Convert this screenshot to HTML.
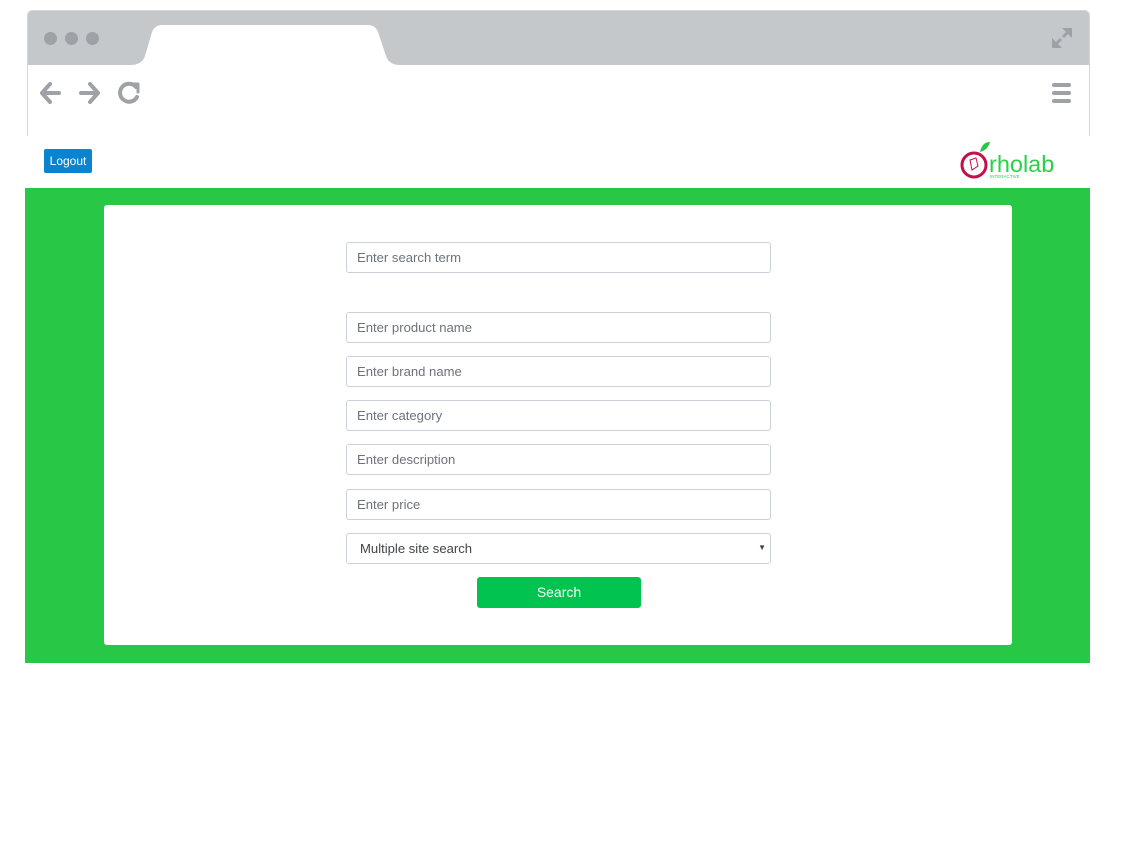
<!DOCTYPE html>
<html><head><style>
*{box-sizing:border-box;margin:0;padding:0}
body{width:1130px;height:864px;background:#fff;font-family:"Liberation Sans",sans-serif;position:relative;overflow:hidden}
.abs{position:absolute}
.inp{position:absolute;left:346px;width:425px;height:31px;border:1px solid #ccd0da;border-radius:3px;font-size:13.1px;color:#6c737a;padding:7px 10px;background:#fff}
</style></head><body>
<div class="abs" style="left:27px;top:10px;width:1063px;height:126px;border:1px solid #d4d6d9;border-bottom:none;border-radius:5px 5px 0 0;background:#fff"></div>
<div class="abs" style="left:28px;top:11px;width:1061px;height:54px;background:#c5c8cb;border-radius:4px 4px 0 0"></div>
<svg class="abs" style="left:130px;top:24px" width="270" height="42"><path d="M0 41 Q12 41 15 32 L22 8 Q25 1 32 1 L238 1 Q245 1 248 8 L256 32 Q259 41 270 41 Z" fill="#fff"/></svg>
<div class="abs" style="left:44px;top:32px;width:13px;height:13px;border-radius:50%;background:#9ea2a6"></div>
<div class="abs" style="left:65px;top:32px;width:13px;height:13px;border-radius:50%;background:#9ea2a6"></div>
<div class="abs" style="left:86px;top:32px;width:13px;height:13px;border-radius:50%;background:#9ea2a6"></div>
<svg class="abs" style="left:1050px;top:26px" width="24" height="24" stroke="#9ea2a6" stroke-width="3" fill="#9ea2a6"><path d="M4 20 L11 13"/><path d="M20 4 L13 11"/><path d="M2 12 L2 22 L12 22Z" stroke="none"/><path d="M22 2 L12 2 L22 12Z" stroke="none"/></svg>
<svg class="abs" style="left:38px;top:80px" width="110" height="26" fill="none" stroke="#9ea2a6" stroke-width="4" stroke-linecap="round" stroke-linejoin="round"><path d="M4 13 H21 M12 4 L4 13 L12 22"/><path d="M43 13 H60 M52 4 L60 13 L52 22"/><path d="M98 7 A9 9 0 1 0 99 17"/><path d="M91 4 L100 4 L100 12" stroke-width="3"/></svg>
<div class="abs" style="left:1052px;top:83px;width:19px;height:4px;border-radius:2px;background:#9ea2a6"></div>
<div class="abs" style="left:1052px;top:91px;width:19px;height:4px;border-radius:2px;background:#9ea2a6"></div>
<div class="abs" style="left:1052px;top:99px;width:19px;height:4px;border-radius:2px;background:#9ea2a6"></div>
<div class="abs" style="left:44px;top:149px;width:48px;height:24px;background:#0a84d0;border-radius:2px;color:#fff;font-size:12px;line-height:24px;text-align:center">Logout</div>
<svg class="abs" style="left:958px;top:140px" width="105" height="44"><path d="M22 12 Q24 2 32 2 Q30 10 22 12Z" fill="#2ac64a"/><circle cx="16" cy="25" r="12" fill="none" stroke="#c4104a" stroke-width="3"/><path d="M12 20 L18 18 L20 26 L14 30 Z" fill="none" stroke="#c4104a" stroke-width="1"/><text x="31" y="32" font-family="Liberation Sans" font-size="23.5" fill="#2ad04a">rholab</text><text x="32" y="38" font-family="Liberation Sans" font-size="4.5" fill="#2ad04a">INTERACTIVE</text></svg>
<div class="abs" style="left:25px;top:188px;width:1065px;height:475px;background:#28c745"></div>
<div class="abs" style="left:104px;top:205px;width:908px;height:440px;background:#fff;border-radius:3px"></div>
<div class="inp" style="top:242px">Enter search term</div>
<div class="inp" style="top:312px">Enter product name</div>
<div class="inp" style="top:356px">Enter brand name</div>
<div class="inp" style="top:400px">Enter category</div>
<div class="inp" style="top:444px">Enter description</div>
<div class="inp" style="top:489px">Enter price</div>
<div class="inp" style="top:533px;color:#3f454b;padding-left:13px">Multiple site search<span style="position:absolute;right:4px;top:9px;font-size:8px;color:#444">▼</span></div>
<div class="abs" style="left:477px;top:577px;width:164px;height:31px;background:#00c44f;border-radius:3px;color:#fff;font-size:14px;line-height:31px;text-align:center">Search</div>
</body></html>
